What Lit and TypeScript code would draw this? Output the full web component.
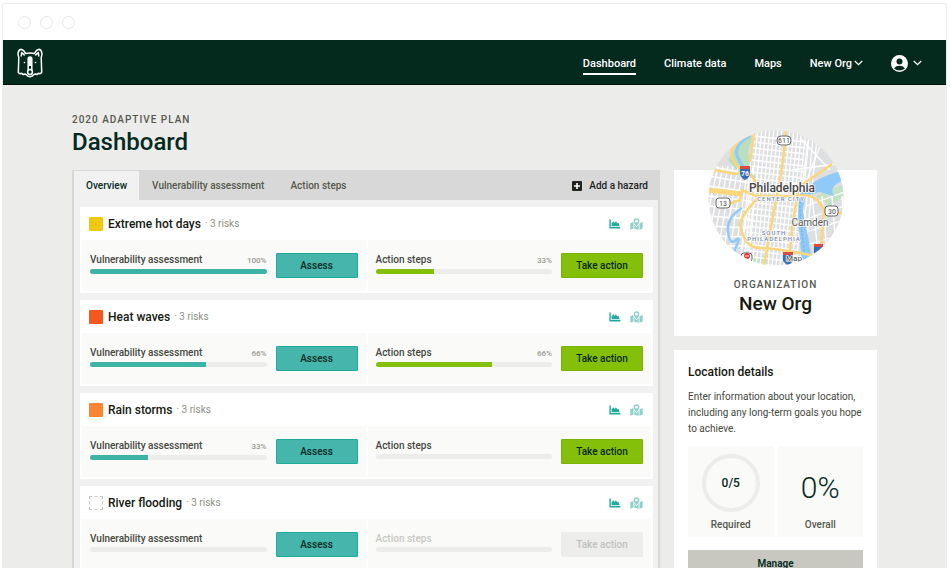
import { LitElement, html, css, svg } from "lit";
import { customElement, property } from "lit/decorators.js";

interface Hazard {
  name: string;
  level: "yellow" | "red" | "orange" | "none";
  assessed: number;
  acted: number;
  locked?: boolean;
}

const hazards: Hazard[] = [
  { name: "Extreme hot days", level: "yellow", assessed: 100, acted: 33 },
  { name: "Heat waves", level: "red", assessed: 66, acted: 66 },
  { name: "Rain storms", level: "orange", assessed: 33, acted: 0 },
  { name: "River flooding", level: "none", assessed: 0, acted: 0, locked: true },
];

const chevron = svg`<svg width="9" height="6" viewBox="0 0 9 6" fill="none" stroke="currentColor" stroke-width="1.3" aria-hidden="true"><path d="M.8 1 4.5 4.7 8.2 1"/></svg>`;

const chartIcon = svg`<svg width="12" height="10" viewBox="0 0 12 10" fill="currentColor" aria-hidden="true"><path d="M.4 .6h1.400v7.400h9.600v1.400H.9Q.4 9.400 .4 8.900Z"/><path d="M2.600 7.300V4.200L4.300 2.200 5.600 4 6.900 2.200 8.200 4.200 9.400 3.800 10.700 7.300Z"/></svg>`;

const mapIcon = svg`<svg width="13" height="12" viewBox="0 0 13 12" fill="currentColor" aria-hidden="true"><path fill-rule="evenodd" d="M6.500 .3a2.900 2.900 0 0 1 2.900 2.900C9.400 4.800 7.500 7.200 6.500 8.300 5.500 7.200 3.600 4.800 3.600 3.200A2.900 2.900 0 0 1 6.500 .3Zm0 1.500a1.400 1.400 0 1 0 0 2.800 1.400 1.400 0 0 0 0-2.800Z"/><path d="M.3 5.200 3 4.100 3.500 5.200V10.600L.3 11.800ZM4.300 6.600 6.500 9.300 8.700 6.600V11.800L4.300 10.700ZM9.500 5.200 12.700 3.900V10.500L9.500 11.800Z"/></svg>`;

const bear = svg`<svg width="26" height="30" viewBox="0 0 26 30" fill="none" stroke="#fff" stroke-width="1.500" stroke-linejoin="round" stroke-linecap="round" aria-hidden="true">
  <path d="M1.800 9.500 1.300 24.600l1.900 1.200 1.500-.5 1.400 1.300 1.600-.6 1.700.7Q10.500 28.700 13 28.700t3.600-2l1.700-.7 1.600.6 1.400-1.300 1.500.5 1.900-1.200L24.200 9.500Q25.300 6.700 24.700 4.300 23.700 1.100 21.500 1.400 19.300 1.700 17.400 5.600 13 4.600 8.600 5.600 6.700 1.700 4.500 1.400 2.300 1.100 1.300 4.300 .7 6.700 1.800 9.500Z"/>
  <path d="M4.200 8 4.700 4.600 7.200 6.900M21.800 8 21.300 4.600 18.800 6.900"/>
  <path d="M11.200 22V10.800Q11.200 9 13 9T14.800 10.800V22"/>
  <path d="M13 10V18" stroke-width="3" stroke-linecap="butt"/>
  <circle cx="13" cy="24" r="2.400"/>
  <circle cx="7.500" cy="14.500" r=".8" fill="#fff" stroke="none"/><circle cx="18.500" cy="14.500" r=".8" fill="#fff" stroke="none"/>
</svg>`;

const range = (n: number) => Array.from({ length: n }, (_, i) => i);

const cityMap = svg`<svg class="map" viewBox="0 0 136 136" role="img" aria-label="Map of Philadelphia">
  <defs><clipPath id="round"><circle cx="68" cy="68" r="67.500"/></clipPath></defs>
  <g clip-path="url(#round)">
    <rect width="136" height="136" fill="#dedfe1"/>
    <path d="M20 30 34 6 46 2 40 22 44 38 30 42Z" fill="#b9dfbf"/>
    <path d="M108 66 122 76 136 66V54ZM44 128 62 124 60 136H40Z" fill="#c4e3c6"/>
    <g stroke="#fff" stroke-width="1.300" fill="none">
      ${range(17).map((i) => svg`<path d="M${46 + i * 4} -2 ${32 + i * 4} 136"/>`)}
      ${range(22).map((i) => svg`<path d="M${46 - i / 2} ${6 + i * 6} ${98 - i / 2} ${12 + i * 6}"/>`)}
      ${range(9).map((i) => svg`<path d="M0 ${36 + i * 10} 42 ${44 + i * 9}"/><path d="M${-8 + i * 6} 120 ${10 + i * 5} 36"/>`)}
      ${range(5).map((i) => svg`<path d="M98 ${76 + i * 13} 136 ${62 + i * 14}"/><path d="M${102 + i * 9} 132 ${94 + i * 10} 66"/>`)}
      <path d="M92 8 122 40M84 40 128 34M100 10 94 60M112 16 98 52"/>
    </g>
    <path d="M100 57Q112 46 130 42L136 50Q120 56 126 66L112 62 97 66 95 82Q101 108 105 136H94Q92 108 90 90Q90 72 92 64Z" fill="#90caf9"/>
    <path d="M92 72Q92 100 99 134" fill="none" stroke="#6ba7dc" stroke-width=".8" stroke-dasharray="2 2"/>
    <path d="M42 6Q24 16 30 28T46 48" fill="none" stroke="#90caf9" stroke-width="3"/>
    <path d="M34 78Q18 88 20 102T28 110 26 122" fill="none" stroke="#90caf9" stroke-width="2.500"/>
    <g fill="none" stroke="#fbd67a" stroke-width="2.500">
      <path d="M38 6Q20 18 24 28T42 44Q48 50 54 64M46 2 42 32M78 0Q76 30 70 60T56 136M20 74 32 70 34 60 48 66H90Q108 62 116 80L112 136M6 40 28 44 40 38M124 34Q104 48 92 56 84 86 82 122M50 68Q34 84 32 94 36 118 52 118T108 126M128 84 136 82"/>
      <path d="M0 60 34 64" stroke-width="5"/>
    </g>
    <g font-family="Roboto, sans-serif" text-anchor="middle">
      <g fill="#fff" stroke="#666" stroke-width="1"><rect x="69" y="6" width="14" height="9" rx="4"/><rect x="8" y="68" width="14" height="10" rx="3"/><rect x="117" y="76" width="13" height="10" rx="3"/></g>
      <g font-size="7" fill="#444"><text x="76" y="13">611</text><text x="15" y="76">13</text><text x="124" y="84">30</text></g>
      <path d="M32 37h10v5q0 6-5 8-5-2-5-8Z" fill="#3b6db5"/><path d="M32 36h10v3H32Z" fill="#d94b3f"/>
      <text x="37" y="46" font-size="7" fill="#fff" font-weight="700">76</text>
      <path d="M75 123h10v8l-5 5-5-5ZM106 115h9v8h-9Z" fill="#3b6db5"/><path d="M75 122h10v3H75ZM106 114h9v3h-9Z" fill="#d94b3f"/>
      <rect x="33" y="123" width="11" height="9" rx="3" fill="#fff" stroke="#666"/><circle cx="39" cy="126" r="3" fill="#e33"/><path d="M37 126h4" stroke="#fff" stroke-width="1"/>
      <g stroke="#fff" stroke-width="1.500" stroke-linejoin="round" paint-order="stroke">
        <text x="74" y="62" font-size="12" fill="#444" font-weight="500">Philadelphia</text>
        <text x="102" y="96" font-size="10" fill="#555">Camden</text>
        <text x="86" y="131" font-size="8" fill="#444">Map</text>
        <g font-size="6" font-weight="500" fill="#7586ab" letter-spacing="1"><text x="73" y="71">CENTER CITY</text><text x="66" y="105">SOUTH</text><text x="66" y="111">PHILADELPHIA</text></g>
      </g>
    </g>
  </g>
</svg>`;

@customElement("progress-block")
class ProgressBlock extends LitElement {
  @property() label = "";
  @property() action = "";
  @property() tone = "teal";
  @property({ type: Number }) value = 0;
  @property({ type: Boolean }) locked = false;

  static styles = css`
    :host { flex: 1; min-width: 0; background: #fafaf9; padding: 13px 8px; }
    .row { display: flex; align-items: flex-start; gap: 9px; }
    .meter { flex: 1; min-width: 0; }
    .caption { display: flex; justify-content: space-between; align-items: baseline; line-height: 13px; font-size: 10px; color: #45483e; font-weight: 500; }
    .percent { font-size: 8px; color: #96988f; }
    .track { height: 5px; margin-top: 2px; border-radius: 3px; background: #ececeb; overflow: hidden; }
    .fill { height: 100%; }
    .teal .fill { background: #3db3a6; }
    .green .fill { background: #84c009; }
    button { box-sizing: border-box; width: 82px; height: 25px; border: 1px solid #1fab9c; border-radius: 1px; padding: 0; background: #46b5ab; color: #04291d; font-family: inherit; font-size: 10px; font-weight: 500; }
    .green button { background: #84c009; border-color: #78b400; }
    .locked .caption { color: #c6c8c4; }
    .locked button { background: #ededec; border-color: #ededec; color: #bfc2bf; }
  `;

  render() {
    return html`<div class="row ${this.tone} ${this.locked ? "locked" : ""}">
      <div class="meter">
        <div class="caption"><span>${this.label}</span>${this.value ? html`<span class="percent">${this.value}%</span>` : ""}</div>
        <div class="track" role="progressbar" aria-label=${this.label} aria-valuenow=${this.value}><div class="fill" style="width:${this.value}%"></div></div>
      </div>
      <button ?disabled=${this.locked}>${this.action}</button>
    </div>`;
  }
}

@customElement("app-root")
class AppRoot extends LitElement {
  static styles = css`
    :host { display: block; height: 100vh; box-sizing: border-box; padding: 3px 3px 2px 2px; background: #fff; font-family: Roboto, "Noto Sans", sans-serif; color: #04291d; }
    * { box-sizing: border-box; }
    h1, h2, h3, p { margin: 0; }
    a { color: inherit; text-decoration: none; }
    button { font: inherit; color: inherit; border: 0; padding: 0; background: none; }
    svg { display: block; }
    .window { height: 100%; overflow: auto; scrollbar-width: none; border: 1px solid #ececec; border-bottom: 0; border-radius: 3px 3px 0 0; background: #ececeb; }
    .chrome { display: flex; align-items: center; gap: 9px; height: 36px; padding-left: 15px; background: #fff; }
    .dot { width: 13px; height: 13px; border: 1px solid #e6e6e6; border-radius: 50%; }
    .bar { display: flex; align-items: center; justify-content: space-between; height: 45px; padding: 2px 24px 0 14px; background: #04291d; border-bottom: 1px solid #001309; color: #fff; }
    nav { display: flex; align-items: center; font-size: 11px; font-weight: 500; gap: 28px; }
    nav a { line-height: 18px; border: 2px solid transparent; border-width: 3px 0 2px; }
    nav a.current { border-bottom-color: #fff; }
    .menu { display: flex; align-items: center; gap: 2px; font-weight: 500; }
    .menu.account { gap: 5px; }
    .page { display: grid; grid-template-columns: minmax(0, 588fr) minmax(0, 203fr); column-gap: 14px; margin: 0 69px; padding-top: 29px; }
    .eyebrow { font-size: 10px; line-height: 12px; letter-spacing: 1px; font-weight: 500; color: #55584d; }
    h1 { font-size: 24px; line-height: 32px; font-weight: 500; }
    .panel { margin-top: 12px; border: 2px solid #d8d8d8; border-top-width: 1px; background: #f1f1f1; }
    .tabs { display: flex; align-items: stretch; height: 29px; background: #d8d8d8; font-size: 10px; font-weight: 500; color: #55584d; }
    .tabs button { padding: 0 13px; }
    .tabs .active { padding: 0 12px; background: #f1f1f1; color: #04291d; }
    .tabs .add { display: flex; align-items: center; gap: 7px; margin-left: auto; padding: 0 10px; color: #22251e; }
    .list { display: grid; gap: 7px; padding: 7px 5px 7px 6px; }
    .card { background: #fff; padding: 0 2px 2px; }
    .head { display: flex; align-items: center; height: 33px; padding: 0 8px 0 7px; }
    .swatch { width: 14px; height: 14px; margin-right: 5px; border-radius: 1px; }
    .yellow { background: #f2c80a; }
    .red { background: #f4581c; }
    .orange { background: #fb8532; }
    .none { border: 1px dashed #c4c4c4; }
    .name { font-size: 12px; font-weight: 500; color: #15190f; }
    .risks { font-size: 10px; margin-left: 4px; color: #8c8f84; }
    .icons { display: flex; align-items: center; gap: 9px; margin-left: auto; color: #22aa9c; }
    .icons button + button { color: #8fd0c9; }
    .halves { display: flex; gap: 2px; }
    aside { margin-top: 56px; display: grid; gap: 14px; align-content: start; }
    .org, .details { background: #fff; text-align: center; }
    .org { padding-bottom: 19px; }
    .map { width: 136px; height: 136px; margin: -40px auto 13px; }
    .org h2 { font-size: 19px; line-height: 26px; font-weight: 500; color: #15190f; }
    .details { padding: 14px; text-align: left; }
    h3 { font-size: 12px; line-height: 16px; font-weight: 500; color: #15190f; }
    .details p { margin: 9px 0; font-size: 10px; line-height: 16px; color: #45483e; }
    .stats { display: grid; grid-template-columns: 1fr 1fr; gap: 4px; }
    .stat { display: flex; flex-direction: column; align-items: center; gap: 5px; padding: 8px 0 4px; background: #fafaf9; font-size: 10px; line-height: 16px; font-weight: 500; color: #55584d; }
    .ring { display: grid; place-items: center; width: 58px; height: 58px; border: 4px solid #ececeb; border-radius: 50%; font-size: 12px; color: #04291d; }
    .big { height: 58px; padding-top: 8px; font-size: 30px; line-height: 52px; font-weight: 300; color: #04291d; }
    .manage { display: block; width: 100%; height: 26px; margin-top: 13px; background: #c8c8c0; font-size: 10px; font-weight: 600; }
  `;

  render() {
    return html`<div class="window">
      <div class="chrome"><span class="dot"></span><span class="dot"></span><span class="dot"></span></div>
      <header class="bar">
        <a href="#" aria-label="Home">${bear}</a>
        <nav>
          <a href="#" class="current">Dashboard</a><a href="#">Climate data</a><a href="#">Maps</a>
          <button class="menu">New Org ${chevron}</button>
          <button class="menu account" aria-label="Account"><svg width="17" height="17" viewBox="0 0 17 17" aria-hidden="true"><circle cx="8.500" cy="8.500" r="8.500" fill="#fff"/><circle cx="8.500" cy="6.600" r="3" fill="#04291d"/><path d="M3 13.200Q5 10.800 8.500 10.800T14 13.200Q11.800 15.400 8.500 15.400T3 13.200Z" fill="#04291d"/></svg>${chevron}</button>
        </nav>
      </header>
      <div class="page">
        <main>
          <div class="eyebrow">2020 ADAPTIVE PLAN</div>
          <h1>Dashboard</h1>
          <section class="panel">
            <div class="tabs">
              <button class="active">Overview</button><button>Vulnerability assessment</button><button>Action steps</button>
              <button class="add"><svg width="10" height="10" viewBox="0 0 10 10" aria-hidden="true"><rect width="10" height="10" rx="1" fill="#22251e"/><path d="M5 2v6M2 5h6" stroke="#fff" stroke-width="1.600"/></svg>Add a hazard</button>
            </div>
            <div class="list">${hazards.map((h) => html`<article class="card">
              <div class="head">
                <span class="swatch ${h.level}"></span><h2 class="name">${h.name}</h2><span class="risks">· 3 risks</span>
                <div class="icons"><button aria-label="Chart">${chartIcon}</button><button aria-label="Map">${mapIcon}</button></div>
              </div>
              <div class="halves">
                <progress-block label="Vulnerability assessment" action="Assess" .value=${h.assessed}></progress-block>
                <progress-block label="Action steps" action="Take action" tone="green" .value=${h.acted} ?locked=${h.locked}></progress-block>
              </div>
            </article>`)}</div>
          </section>
        </main>
        <aside>
          <section class="org">${cityMap}<div class="eyebrow">ORGANIZATION</div><h2>New Org</h2></section>
          <section class="details">
            <h3>Location details</h3>
            <p>Enter information about your location, including any long-term goals you hope to achieve.</p>
            <div class="stats">
              <div class="stat"><span class="ring">0/5</span>Required</div>
              <div class="stat"><span class="big">0%</span>Overall</div>
            </div>
            <button class="manage">Manage</button>
          </section>
        </aside>
      </div>
    </div>`;
  }
}
